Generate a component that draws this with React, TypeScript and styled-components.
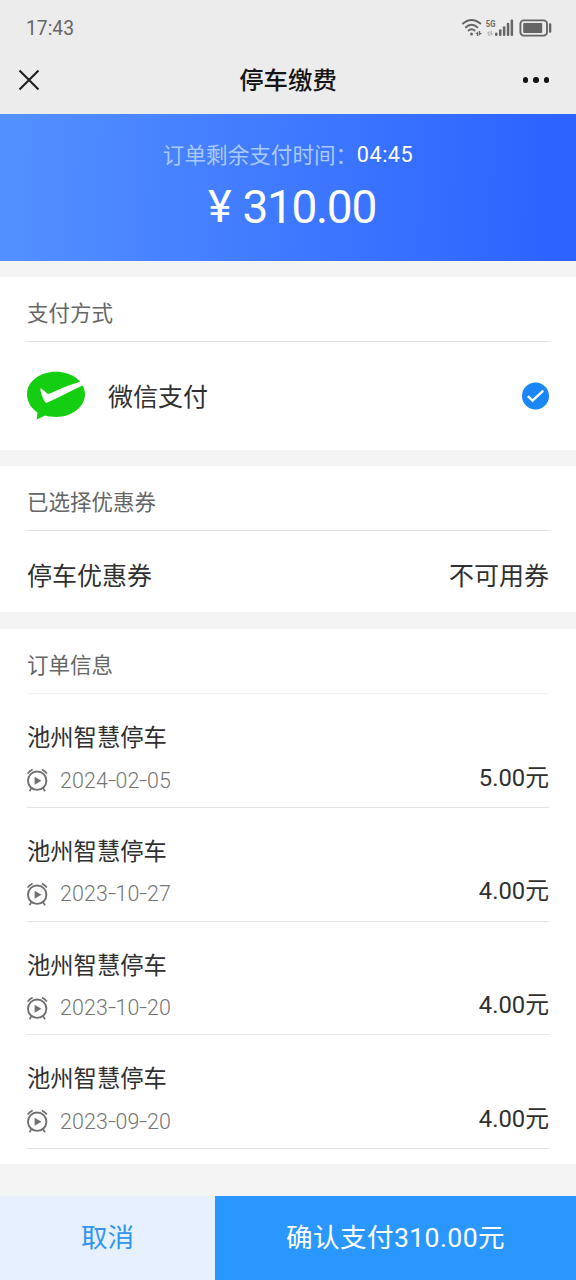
import React from 'react';
import styled, { createGlobalStyle } from 'styled-components';

const Global = createGlobalStyle`
  * { box-sizing: border-box; }
  body {
    margin: 0;
    background: #f4f4f4;
    color: #303030;
    font-family: Roboto, "Noto Sans CJK SC", sans-serif;
  }
  svg { display: block; flex: none; }
`;

const Page = styled.div`
  display: flex;
  flex-direction: column;
  width: 576px;
  height: 1280px;
  overflow: hidden;
`;

const StatusBar = styled.div`
  display: flex;
  justify-content: space-between;
  height: 56px;
  padding: 0 24px 0 26px;
  align-items: center;
  background: #ececec;
  color: #666;
  font-size: 19.3px;
`;

const NavBar = styled.header`
  display: grid;
  grid-template-columns: 60px 1fr 60px;
  align-items: center;
  height: 58px;
  padding: 0 17px 10px 17px;
  background: #ececec;
`;

const Title = styled.h1`
  margin: 0;
  padding-top: 2px;
  text-align: center;
  font-size: 24.4px;
  line-height: 36px;
  font-weight: 500;
  color: #151515;
`;

const More = styled.div`
  display: flex;
  justify-content: flex-end;
  gap: 5px;
  padding-right: 10px;
  i { width: 5.4px; height: 5.4px; border-radius: 50%; background: #151515; }
`;

const Banner = styled.section`
  height: 147px;
  padding-top: 25px;
  text-align: center;
  color: #fff;
  background: linear-gradient(92deg, #528fff 0%, #528fff 4%, #2c63ff 96%);
`;

const Countdown = styled.div`
  display: flex;
  justify-content: center;
  font-size: 21.6px;
  line-height: 32px;
  span { width: 194px; padding-top: 1px; text-align: left; color: #a9c9ff; white-space: nowrap; }
  b { font-weight: 400; letter-spacing: 0.5px; }
`;

const Total = styled.div`
  display: flex;
  justify-content: center;
  gap: 12px;
  margin-top: 7px;
  padding-left: 8px;
  font-size: 46px;
  line-height: 56px;
  letter-spacing: -1.3px;
`;

const Yen = styled.span`
  font-size: 45px;
`;

const Card = styled.section<{ $height: number; $gap: number }>`
  height: ${(p) => p.$height}px;
  margin-top: ${(p) => p.$gap}px;
  padding: 0 27px;
  background: #fff;
`;

const CardTitle = styled.h2<{ $line?: string }>`
  margin: 0;
  height: 65px;
  padding-top: 21px;
  font-size: 21.5px;
  line-height: 32px;
  font-weight: 400;
  color: #666;
  border-bottom: 1px solid ${(p) => p.$line ?? '#e2e2e2'};
`;

const OptionRow = styled.div<{ $height: number }>`
  display: flex;
  align-items: center;
  height: ${(p) => p.$height}px;
  font-size: 25px;
  line-height: 36px;
`;

const OptionText = styled.span<{ $grow?: boolean; $indent?: number }>`
  flex: ${(p) => (p.$grow ? 1 : 'none')};
  padding-left: ${(p) => p.$indent ?? 0}px;
  padding-top: 4px;
`;

const Order = styled.article`
  height: 113.75px;
  padding-top: 27px;
  border-bottom: 1px solid #e4e4e4;
`;

const OrderName = styled.div`
  font-size: 23.3px;
  line-height: 34px;
`;

const OrderMeta = styled.div`
  display: flex;
  align-items: center;
  height: 32px;
  margin-top: 9px;
`;

const OrderDate = styled.time`
  flex: 1;
  padding-left: 12px;
  font-size: 21.4px;
  font-weight: 300;
  letter-spacing: 0.15px;
  color: #757575;
`;

const Dash = styled.span`
  display: inline-block;
  transform: scaleX(1.35);
  margin: 0 0.6px;
`;

const Price = styled.span`
  font-size: 23.8px;
  line-height: 32px;
  margin-top: -5px;
`;

const Footer = styled.footer`
  display: flex;
  height: 84px;
  margin-top: 32px;
`;

const Action = styled.button<{ $primary?: boolean }>`
  width: ${(p) => (p.$primary ? 361 : 215)}px;
  padding: 0 0 5px;
  border: 0;
  font: inherit;
  font-size: 26.6px;
  letter-spacing: ${(p) => (p.$primary ? 0.4 : 0)}px;
  color: ${(p) => (p.$primary ? '#fff' : '#3296f0')};
  background: ${(p) => (p.$primary ? '#2a97ff' : '#e6f0ff')};
`;

const StatusIcons = () => (
  <svg width="92" height="24" viewBox="460 16 92 24">
    <g fill="none" stroke="#666" strokeWidth="1.9">
      <path d="M462.3 24Q471.5 15.8 481 24" />
      <path d="M465.3 27.7Q471.5 21.8 478 27.7" />
      <path d="M468 31Q471.5 27.6 475.2 31" />
      <rect x="520.4" y="20.4" width="26.6" height="15.2" rx="3.4" />
    </g>
    <g fill="#666">
      <circle cx="471.5" cy="34" r="1.5" />
      <path d="M475.2 34l3-2.8v4.8h-1.3v-2zM478.9 31v4.8l3.2-2.8h-1.9v-2z" />
      <rect x="523.2" y="23" width="19" height="10" rx="1" />
      <rect x="549" y="23.2" width="2.3" height="9.6" rx="1" />
      <rect x="495" y="32.5" width="2.5" height="3.5" rx="1" />
      <rect x="499" y="29.2" width="2.5" height="6.8" rx="1" />
      <rect x="502.9" y="26.3" width="2.5" height="9.7" rx="1" />
      <rect x="506.8" y="22.8" width="2.5" height="13.2" rx="1" />
      <rect x="510.6" y="19.5" width="2.5" height="16.5" rx="1" />
    </g>
    <path fill="#b4b4b4" d="M486.5 33.6l3-2.9v5.2h-1.3v-2.3zM490.6 30.8v5.2l3.2-2.8h-1.9v-2.4z" />
    <text x="485.8" y="26.8" fill="#666" fontSize="9.6" fontWeight="700" fontFamily="Roboto" textLength="9.6" lengthAdjust="spacingAndGlyphs">5G</text>
  </svg>
);

const CloseIcon = () => (
  <svg width="24" height="24" viewBox="0 0 24 24" stroke="#1c1c1c" strokeWidth="2">
    <path d="M2.5 2.5l19 19M21.5 2.5l-19 19" />
  </svg>
);

const WechatPayIcon = () => (
  <svg width="60" height="50" viewBox="0 0 60 50">
    <path
      fill="#14ce12"
      d="M29 .8C13 .8 0 10.4 0 23.2c0 7.4 3.900 13.800 10.500 18.300L9.700 48.600l8.500-4.100c3.400 1 7 1.400 10.800 1.400 16 0 29-10.200 29-22.700S45 .8 29 .8z"
    />
    <path
      fill="#fff"
      d="M13.200 18.200c1 4.800 2.600 9.300 4.900 12.700.8 1 1.800 1.200 3 .4C32.500 26.200 43.500 20 56.500 14L53.500 10.600C42.500 14 32.500 18.200 23 22.500c-1.200.5-2 .4-3-.3l-4.800-3.900c-1-.8-2.200-1-2-.1z"
    />
  </svg>
);

const CheckedIcon = () => (
  <svg width="27" height="28" viewBox="0 0 27 28">
    <circle cx="13.5" cy="14" r="13.5" fill="#1b86f5" />
    <path d="M5.800 14.200l4.700 4.400L21.300 8.600" fill="none" stroke="#fff" strokeWidth="2.4" />
  </svg>
);

const AlarmIcon = () => (
  <svg width="21" height="24" viewBox="0 0 21 24" fill="none" stroke="#707070">
    <circle cx="10.2" cy="12.7" r="9.2" strokeWidth="1.9" />
    <path strokeWidth="1.7" d="M.6 5.6Q2.6 2.8 5.6 1.4M14.9 1.4Q17.9 2.8 19.9 5.6M4.4 20.300l-1.900 2.900M16.100 20.300l1.900 2.900" />
    <path d="M7.6 8.7l6.8 4-6.8 4z" fill="#707070" stroke="none" />
  </svg>
);

const orders = [
  { date: ['2024', '02', '05'], price: '5.00' },
  { date: ['2023', '10', '27'], price: '4.00' },
  { date: ['2023', '10', '20'], price: '4.00' },
  { date: ['2023', '09', '20'], price: '4.00' },
];

export default function App() {
  return (
    <Page>
      <Global />
      <StatusBar>
        <span>17:43</span>
        <StatusIcons />
      </StatusBar>
      <NavBar>
        <CloseIcon />
        <Title>停车缴费</Title>
        <More><i /><i /><i /></More>
      </NavBar>
      <Banner>
        <Countdown><span>订单剩余支付时间：</span><b>04:45</b></Countdown>
        <Total><Yen>¥</Yen><span>310.00</span></Total>
      </Banner>
      <Card $height={173} $gap={16}>
        <CardTitle>支付方式</CardTitle>
        <OptionRow $height={108}>
          <WechatPayIcon />
          <OptionText $grow $indent={21}>微信支付</OptionText>
          <CheckedIcon />
        </OptionRow>
      </Card>
      <Card $height={146} $gap={16}>
        <CardTitle>已选择优惠券</CardTitle>
        <OptionRow $height={88}>
          <OptionText $grow>停车优惠券</OptionText>
          <OptionText>不可用券</OptionText>
        </OptionRow>
      </Card>
      <Card $height={535} $gap={17}>
        <CardTitle $line="#f1f1f1">订单信息</CardTitle>
        {orders.map(({ date, price }) => (
          <Order key={date.join('-')}>
            <OrderName>池州智慧停车</OrderName>
            <OrderMeta>
              <AlarmIcon />
              <OrderDate>{date[0]}<Dash>-</Dash>{date[1]}<Dash>-</Dash>{date[2]}</OrderDate>
              <Price>{price}元</Price>
            </OrderMeta>
          </Order>
        ))}
      </Card>
      <Footer>
        <Action>取消</Action>
        <Action $primary>确认支付310.00元</Action>
      </Footer>
    </Page>
  );
}
